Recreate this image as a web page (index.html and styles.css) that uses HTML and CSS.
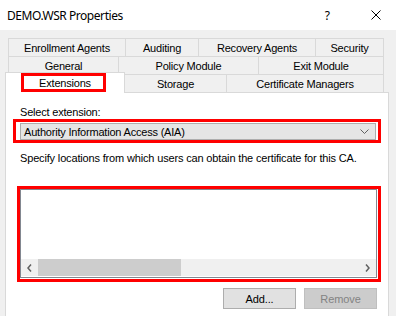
FILE: index.html
```html
<!DOCTYPE html>
<html>
<head>
<meta charset="utf-8">
<link rel="stylesheet" href="styles.css">
</head>
<body>
<div class="window">
  <div class="titlebar">
    <span class="title">DEMO.WSR Properties</span>
    <span class="help">?</span>
    <svg class="close" width="10" height="10" viewBox="0 0 10 10"><path d="M0.5 0.5L9.5 9.5M9.5 0.5L0.5 9.5" stroke="#000" stroke-width="1" fill="none"/></svg>
  </div>
  <div class="tabs">
    <div class="row row1">
      <div class="tab w-enroll">Enrollment Agents</div>
      <div class="tab w-audit">Auditing</div>
      <div class="tab w-recov">Recovery Agents</div>
      <div class="tab w-sec">Security</div>
    </div>
    <div class="row row2">
      <div class="tab w-general">General</div>
      <div class="tab w-policy">Policy Module</div>
      <div class="tab w-exit">Exit Module</div>
    </div>
    <div class="row row3">
      <div class="tab selected w-ext"><span class="mark mark-tab"></span>Extensions</div>
      <div class="tab w-storage">Storage</div>
      <div class="tab w-cert">Certificate Managers</div>
    </div>
  </div>
  <div class="panel">
    <div class="label">Select extension:</div>
    <div class="combo">
      <span class="mark mark-combo"></span>
      <span>Authority Information Access (AIA)</span>
      <svg class="chev" width="9" height="5" viewBox="0 0 9 5"><path d="M0.5 0.5L4.5 4.5L8.5 0.5" stroke="#606060" stroke-width="1" fill="none"/></svg>
    </div>
    <div class="desc">Specify locations from which users can obtain the certificate for this CA.</div>
    <div class="listbox">
      <span class="mark mark-list"></span>
      <div class="listarea"></div>
      <div class="hscroll">
        <svg class="arrow" width="5" height="8" viewBox="0 0 5 8"><path d="M4 0.5L1 4L4 7.5" stroke="#606060" stroke-width="1.5" fill="none"/></svg>
        <div class="track"><div class="thumb"></div></div>
        <svg class="arrow" width="5" height="8" viewBox="0 0 5 8"><path d="M1 0.5L4 4L1 7.5" stroke="#606060" stroke-width="1.5" fill="none"/></svg>
      </div>
    </div>
    <div class="buttons">
      <div class="btn">Add...</div>
      <div class="btn disabled">Remove</div>
    </div>
  </div>
</div>
</body>
</html>
```

FILE: styles.css
```css
html, body {
  margin: 0;
  padding: 0;
}
body {
  width: 396px;
  height: 316px;
  overflow: hidden;
  font-family: "Liberation Sans", Arial, sans-serif;
  font-size: 11px;
  color: #000;
}
.window {
  background: #f0f0f0;
  height: 316px;
}
.titlebar {
  height: 30px;
  background: #fff;
  display: flex;
  align-items: center;
  padding-left: 7px;
  font-family: "Noto Sans", sans-serif;
  font-size: 12px;
}
.title {
  flex: 1;
  letter-spacing: -0.45px;
}
.help {
  margin-right: 41px;
  font-size: 12px;
}
.close {
  margin-right: 15px;
}
.tabs {
  padding-top: 8px;
}
.row {
  display: flex;
  height: 18px;
}
.row1, .row2 {
  margin-left: 8px;
}
.row3 {
  margin-left: 5px;
}
.tab {
  box-sizing: border-box;
  height: 18px;
  border: 1px solid #d9d9d9;
  border-left: none;
  border-bottom: none;
  display: flex;
  align-items: center;
  justify-content: center;
  letter-spacing: -0.2px;
  background: #f0f0f0;
}
.row1 .tab:first-child, .row2 .tab:first-child {
  border-left: 1px solid #d9d9d9;
}
.w-enroll { width: 118px; }
.w-audit { width: 73px; }
.w-recov { width: 117px; }
.w-sec { width: 68px; }
.w-general { width: 111px; }
.w-policy { width: 140px; }
.w-exit { width: 125px; }
.w-ext { width: 120px; }
.w-storage { width: 102px; }
.w-cert { width: 157px; }
.tab.selected {
  position: relative;
  background: #fff;
  height: 21px;
  margin-top: -2px;
  border-left: 1px solid #d9d9d9;
  z-index: 1;
  padding-bottom: 1px;
}
.mark {
  position: absolute;
  border: 3px solid #ff0000;
  pointer-events: none;
}
.mark-tab {
  left: 15px;
  right: 18px;
  top: 0px;
  bottom: 1px;
}
.panel {
  background: #fff;
  margin-left: 5px;
  width: 384px;
  height: 224px;
  box-sizing: border-box;
  border-left: 1px solid #d9d9d9;
  border-right: 1px solid #d9d9d9;
  border-top: 1px solid #d9d9d9;
  padding: 12px 11px 0 14px;
}
.label {
  line-height: 14px;
  letter-spacing: -0.2px;
}
.combo {
  position: relative;
  margin-top: 4px;
  width: 356px;
  height: 17px;
  box-sizing: border-box;
  background: #e5e5e5;
  border: 1px solid #adadad;
  display: flex;
  align-items: center;
  padding-left: 3px;
  letter-spacing: -0.2px;
}
.chev {
  margin-left: auto;
  margin-right: 6px;
}
.mark-combo {
  left: -8px;
  right: -6px;
  top: -5px;
  bottom: -4px;
}
.desc {
  margin-top: 11px;
  line-height: 14px;
  letter-spacing: -0.16px;
}
.listbox {
  position: relative;
  margin-top: 24px;
  width: 357px;
  height: 89px;
  box-sizing: border-box;
  border: 1px solid #828790;
  display: flex;
  flex-direction: column;
}
.mark-list {
  left: -4px;
  right: -5px;
  top: -4px;
  bottom: -5px;
}
.listarea {
  flex: 1;
}
.hscroll {
  height: 17px;
  background: #f0f0f0;
  display: flex;
  align-items: center;
  margin-bottom: 1px;
}
.hscroll .arrow {
  margin: 0 6px;
}
.track {
  flex: 1;
  height: 17px;
  display: flex;
  align-items: stretch;
}
.thumb {
  width: 143px;
  background: #cdcdcd;
}
.buttons {
  display: flex;
  justify-content: flex-end;
  gap: 8px;
  width: 357px;
  margin-top: 10px;
}
.btn {
  width: 73px;
  height: 21px;
  box-sizing: border-box;
  background: #e1e1e1;
  border: 1px solid #adadad;
  display: flex;
  align-items: center;
  justify-content: center;
  letter-spacing: -0.1px;
}
.btn.disabled {
  background: #cccccc;
  border-color: #bfbfbf;
  color: #838383;
}
```
